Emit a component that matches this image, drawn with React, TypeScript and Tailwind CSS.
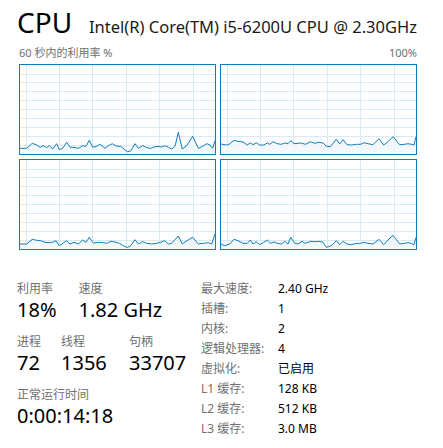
import React from "react";

// CPU performance panel (task manager style)

const GRAPHS = [
  "1,84.3 7.7,84.3 13.3,79.3 17.7,81 21,83.3 24.3,81.7 27.7,83.7 30.3,81.7 33.7,85 37.7,79.7 40.3,85.7 43.7,84.3 47.7,78.3 51,83.3 55,83.3 59.3,84.3 63.7,81.7 67,82.3 70.3,76.3 73.7,83.3 77.7,82.3 81,80.3 86,84.3 89.3,81.7 93.3,79.7 97.7,82.3 101.7,82.3 105,85 108.3,87.7 111.7,87 116,79.7 119.3,84.3 123.7,81.7 127.7,83.7 131.7,84.3 135,83 139,82.3 142.3,83 145.7,81.7 149.3,83.3 152.7,85 156,82.3 159.3,68.3 163.3,85 167.7,81.7 173.7,72.3 179.3,84.3 183.7,82.3 187.7,79.7 191,81 193.7,84.3 196,76.7",
  "1,80 6.3,81 9.7,80 14,76.3 18,77.3 23,78 27.3,81 30.3,78.7 33,80.7 36.3,78.7 39.7,81 43.7,81 47.3,79 49.7,80.3 53,77.7 57.3,79.7 61.3,80.3 64.7,79 68,79.7 70.7,76.7 74,79.7 78,79.3 81.3,79 85.3,80.3 90.7,77.7 94.7,79.3 99,78.3 103,79 106.3,82.3 110.3,82.7 116.3,75.3 119.7,80 123,75.7 127,80.7 131.3,81 136.3,80.3 140.7,80.3 144,78.7 148,79.7 153,80.7 159,74.7 163.7,81 168,77.7 173,72.7 179.7,80.7 184.7,80.3 188,79.7 191.3,80.3 194,81 196,72.7",
  "1,85 7.7,85 13.3,80.3 17.7,81.3 21.7,81.7 26,83.3 30.3,83.7 34.3,83 37,81.7 40.3,86.7 43.7,84.3 47.7,81.7 51,85 55,83.3 59.3,85 63.7,81 67,83.3 70.3,78.3 74.3,84 79.3,83.3 84.3,83.7 87.7,84.3 91.7,82.3 96,83 100.3,84.3 104.3,86.7 108.3,88.5 111.7,86.7 116,80.7 119.3,85 123.7,82.7 127.7,84.3 132.7,85 137.7,84.3 142.3,83 145.7,81.7 149.3,85 152.7,84.3 159.3,77 163.3,85 167,82.3 173.7,78.3 179.3,85 184.3,84.3 189.3,83.7 192.7,85 196,75",
  "1,85 4.7,86.7 9.7,85 14,80.3 18,81.7 23,84.3 27.3,84.3 30.3,81 33,85 36.3,82.7 39.7,85.7 43.7,83.3 47.3,81 50.7,84.3 54,83 57.3,84.3 61.3,85 64.7,82.3 68,85 70.7,78.3 74.7,84.3 78,85 82,82.3 85.3,84.3 90.7,82.3 94.7,82.7 99,82.3 103,83.3 106.3,88.3 111.3,86.7 116.3,81.7 119.7,85.7 123,82.3 127,85 131.3,85.7 136.3,84.3 140.7,84.3 144,83.3 148,84.3 153,85 159,80.3 163.7,85.7 168,81 173,76.3 179.7,85 184.7,84.3 188,83.7 191.3,84.3 194,85.7 196,78.3",
];

const V_LINES = [7.5, 40.5, 73.5, 107.5, 140.5, 174.5];
const H_LINES = [10.5, 18.5, 27.5, 36.5, 45.5, 54.5, 63.5, 72.5, 81.5];

const SPECS: [string, string][] = [
  ["最大速度:", "2.40 GHz"],
  ["插槽:", "1"],
  ["内核:", "2"],
  ["逻辑处理器:", "4"],
  ["虚拟化:", "已启用"],
  ["L1 缓存:", "128 KB"],
  ["L2 缓存:", "512 KB"],
  ["L3 缓存:", "3.0 MB"],
];

function CpuGraph({ points }: { points: string }) {
  return (
    <div className="h-[91px] w-[197px] border border-[#117dbb] bg-white">
      <svg width="195" height="89" viewBox="1 1 195 89" className="block">
        {V_LINES.map((x) => (
          <line key={x} x1={x} y1="0" x2={x} y2="90" stroke="#d9eaf4" />
        ))}
        {H_LINES.map((y) => (
          <line key={y} x1="0" y1={y} x2="197" y2={y} stroke="#d9eaf4" />
        ))}
        <polygon points={`1,90 ${points} 196,90`} fill="#f1f6fa" fillOpacity="0.8" />
        <polyline points={points} fill="none" stroke="#117dbb" strokeWidth="1" strokeLinejoin="round" />
      </svg>
    </div>
  );
}

function Stat({ label, value }: { label: string; value: string }) {
  return (
    <div className="flex flex-col">
      <span className="text-[12px] leading-[17px] text-[#707070]">{label}</span>
      <span className="text-[20px] leading-[26px] text-black">{value}</span>
    </div>
  );
}

export default function App() {
  return (
    <div className="h-[448px] w-[443px] bg-white pl-[17px] pr-[26px] font-['Noto_Sans','Noto_Sans_CJK_SC',sans-serif]">
      <div className="flex items-baseline pt-[3px]">
        <span className="text-[28px] leading-[38px] text-black">CPU</span>
        <span className="ml-auto text-[16.5px] text-[#1a1a1a]">
          Intel(R) Core(TM) i5-6200U CPU @ 2.30GHz
        </span>
      </div>

      <div className="mt-[4px] flex justify-between pl-[2px] text-[11px] leading-[15px] text-[#707070]">
        <span>60 秒内的利用率 %</span>
        <span>100%</span>
      </div>

      <div className="mt-[4px] ml-[2px] grid grid-cols-[197px_197px] gap-[4px]">
        {GRAPHS.map((g, i) => (
          <CpuGraph key={i} points={g} />
        ))}
      </div>

      <div className="mt-[30px] flex">
        <div className="flex w-[184px] flex-col gap-[10px]">
          <div className="flex gap-[22px]">
            <Stat label="利用率" value="18%" />
            <Stat label="速度" value="1.82 GHz" />
          </div>
          <div className="flex">
            <div className="w-[44px]">
              <Stat label="进程" value="72" />
            </div>
            <div className="w-[68px]">
              <Stat label="线程" value="1356" />
            </div>
            <Stat label="句柄" value="33707" />
          </div>
          <Stat label="正常运行时间" value="0:00:14:18" />
        </div>

        <div className="-mt-[1px] grid grid-cols-[77px_auto] text-[12px] leading-[20px]">
          {SPECS.map(([k, v]) => (
            <React.Fragment key={k}>
              <span className="text-[#707070]">{k}</span>
              <span className="text-black">{v}</span>
            </React.Fragment>
          ))}
        </div>
      </div>
    </div>
  );
}
